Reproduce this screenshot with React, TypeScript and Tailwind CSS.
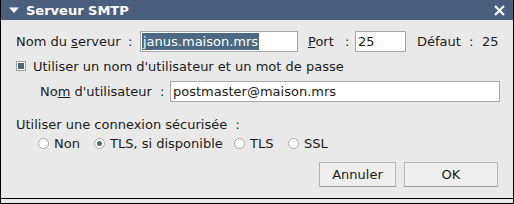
import { useState } from 'react';

const font = { fontFamily: '"DejaVu Sans", "Liberation Sans", sans-serif' };

function Radio({ checked, label, onClick, width }: { checked: boolean; label: string; onClick: () => void; width: string }) {
  return (
    <button onClick={onClick} className={`flex items-center h-[16px] gap-[5px] ${width}`}>
      <span className="w-[11px] h-[11px] rounded-full border border-[#a8a8a8] bg-white flex items-center justify-center shrink-0">
        {checked && <span className="w-[5px] h-[5px] rounded-full bg-[#4b6983]" />}
      </span>
      <span className="whitespace-nowrap">{label}</span>
    </button>
  );
}

export default function App() {
  const [secure, setSecure] = useState('tls-dispo');
  const [useAuth, setUseAuth] = useState(true);

  return (
    <div style={font} className="w-[514px] h-[204px] bg-[#e9e9e9] border-x border-b border-black flex flex-col text-[13px] text-[#1a1a1a] leading-none">
      {/* Title bar */}
      <div className="h-[20px] bg-[#4a5e7e] flex items-center pl-[8px] pr-[8px] text-white">
        <svg width="10" height="8" viewBox="0 0 10 8" className="mr-[7px]">
          <path d="M0 1.5 L10 1.5 L5 7 Z" fill="white" />
        </svg>
        <span className="font-bold text-[13px]">Serveur SMTP</span>
        <svg width="13" height="13" viewBox="0 0 13 13" className="ml-auto mr-[-1px]">
          <path d="M2 2 L11 11 M11 2 L2 11" stroke="white" strokeWidth="2.2" />
        </svg>
      </div>

      <div className="flex-1 flex flex-col border-b border-black">
        {/* Server row */}
        <div className="flex items-center h-[21px] mt-[11px] pl-[15px]">
          <span className="w-[112px]">Nom du <u>s</u>erveur</span>
          <span className="w-[12px]">:</span>
          <div className="w-[158px] h-[21px] border border-[#a8a8a8] bg-white flex items-center pl-[1px]">
            <span className="bg-[#4b6983] text-white h-[17px] flex items-center px-[1px]">janus.maison.mrs</span>
          </div>
          <span className="w-[37px] ml-[10px]"><u>P</u>ort</span>
          <span className="w-[10px]">:</span>
          <div className="w-[51px] h-[21px] border border-[#a8a8a8] bg-white flex items-center pl-[2px]">25</div>
          <span className="w-[52px] ml-[11px]">Défaut</span>
          <span className="w-[13px]">:</span>
          <span>25</span>
        </div>

        {/* Auth checkbox */}
        <button onClick={() => setUseAuth(!useAuth)} className="flex items-center h-[16px] mt-[6px] pl-[15px] gap-[7px] text-left">
          <span className="w-[10px] h-[10px] border border-[#a0a0a0] bg-white flex items-center justify-center">
            {useAuth && <span className="w-[6px] h-[6px] bg-[#4b6983]" />}
          </span>
          <span>Utiliser un nom d'utilisateur et un mot de passe</span>
        </button>

        {/* Username row */}
        <div className="flex items-center h-[21px] mt-[7px] pl-[39px]">
          <span className="w-[120px]">No<u>m</u> d'utilisateur</span>
          <span className="w-[10px]">:</span>
          <div className="w-[330px] h-[21px] border border-[#a8a8a8] bg-white flex items-center pl-[2px]">postmaster@maison.mrs</div>
        </div>

        {/* Secure connection */}
        <div className="flex items-center h-[16px] mt-[14px] pl-[15px]">
          <span>Utiliser une connexion sécurisée&nbsp;&nbsp;:</span>
        </div>
        <div className="flex items-center h-[16px] mt-[3px] pl-[37px]">
          <Radio width="w-[56px]" checked={secure === 'non'} label="Non" onClick={() => setSecure('non')} />
          <Radio width="w-[140px]" checked={secure === 'tls-dispo'} label="TLS, si disponible" onClick={() => setSecure('tls-dispo')} />
          <Radio width="w-[54px]" checked={secure === 'tls'} label="TLS" onClick={() => setSecure('tls')} />
          <Radio width="w-[60px]" checked={secure === 'ssl'} label="SSL" onClick={() => setSecure('ssl')} />
        </div>

        {/* Buttons */}
        <div className="flex justify-end gap-[8px] mt-[11px] pr-[15px]">
          <button className="w-[77px] h-[25px] bg-[#efefef] border border-[#b4b4b4] border-b-[#9a9a9a]">Annuler</button>
          <button className="w-[94px] h-[25px] bg-[#efefef] border border-[#b4b4b4] border-b-[#9a9a9a]">OK</button>
        </div>
      </div>
      <div className="h-[4px]" />
    </div>
  );
}
